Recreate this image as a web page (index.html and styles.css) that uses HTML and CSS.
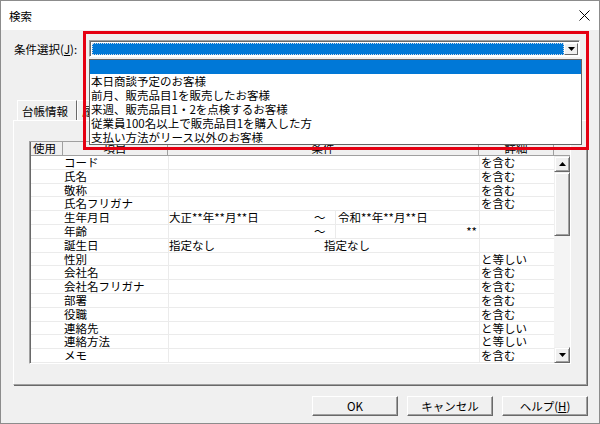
FILE: index.html
```html
<!DOCTYPE html>
<html lang="ja">
<head>
<meta charset="utf-8">
<title>検索</title>
<link rel="stylesheet" href="styles.css">
</head>
<body>
<div class="window">
  <div class="titlebar">
    <span class="title">検索</span>
    <span class="close"><svg width="11" height="11" viewBox="0 0 11 11"><path d="M0.5 0.5L10.5 10.5M10.5 0.5L0.5 10.5" stroke="#000" stroke-width="1"/></svg></span>
  </div>
  <div class="body">
    <div class="cond-row">
      <span class="cond-label">条件選択(<u>J</u>):</span>
      <div class="combo">
        <div class="combo-field"></div>
        <div class="combo-btn"><svg width="7" height="4" viewBox="0 0 7 4"><path d="M0 0H7L3.5 4Z" fill="#000"/></svg></div>
      </div>
    </div>
    <div class="tabs">
      <div class="tab tab-active">台帳情報</div>
      <div class="tab">履歴情報</div>
    </div>
    <div class="panel">
      <div class="grid">
        <div class="grid-head">
          <div class="hcell hcell-use">使用</div>
          <div class="hcell">項目</div>
          <div class="hcell">条件</div>
          <div class="hcell">詳細</div>
          <div class="hcell hcell-pad"></div>
        </div>
        <div class="grid-body">
          <div class="rows">
            <div class="row"><div class="c-use"></div><div class="c-item">コード</div><div class="c-cond"></div><div class="c-det">を含む</div></div>
            <div class="row"><div class="c-use"></div><div class="c-item">氏名</div><div class="c-cond"></div><div class="c-det">を含む</div></div>
            <div class="row"><div class="c-use"></div><div class="c-item">敬称</div><div class="c-cond"></div><div class="c-det">を含む</div></div>
            <div class="row"><div class="c-use"></div><div class="c-item">氏名フリガナ</div><div class="c-cond"></div><div class="c-det">を含む</div></div>
            <div class="row"><div class="c-use"></div><div class="c-item">生年月日</div><div class="c-cond"><span class="sub-from">大正**年**月**日</span><span class="sub-tilde">〜</span><span class="sub-to">令和**年**月**日</span></div><div class="c-det"></div></div>
            <div class="row"><div class="c-use"></div><div class="c-item">年齢</div><div class="c-cond"><span class="sub-from"></span><span class="sub-tilde">〜</span><span class="sub-to sub-right">**</span></div><div class="c-det"></div></div>
            <div class="row"><div class="c-use"></div><div class="c-item">誕生日</div><div class="c-cond"><span class="sub-wide">指定なし</span><span>指定なし</span></div><div class="c-det"></div></div>
            <div class="row"><div class="c-use"></div><div class="c-item">性別</div><div class="c-cond"></div><div class="c-det">と等しい</div></div>
            <div class="row"><div class="c-use"></div><div class="c-item">会社名</div><div class="c-cond"></div><div class="c-det">を含む</div></div>
            <div class="row"><div class="c-use"></div><div class="c-item">会社名フリガナ</div><div class="c-cond"></div><div class="c-det">を含む</div></div>
            <div class="row"><div class="c-use"></div><div class="c-item">部署</div><div class="c-cond"></div><div class="c-det">を含む</div></div>
            <div class="row"><div class="c-use"></div><div class="c-item">役職</div><div class="c-cond"></div><div class="c-det">を含む</div></div>
            <div class="row"><div class="c-use"></div><div class="c-item">連絡先</div><div class="c-cond"></div><div class="c-det">と等しい</div></div>
            <div class="row"><div class="c-use"></div><div class="c-item">連絡方法</div><div class="c-cond"></div><div class="c-det">と等しい</div></div>
            <div class="row"><div class="c-use"></div><div class="c-item">メモ</div><div class="c-cond"></div><div class="c-det">を含む</div></div>
          </div>
          <div class="vscroll">
            <div class="sb-btn"><svg width="7" height="4" viewBox="0 0 7 4"><path d="M0 4H7L3.5 0Z" fill="#000"/></svg></div>
            <div class="sb-thumb"></div>
            <div class="sb-track"></div>
            <div class="sb-btn"><svg width="7" height="4" viewBox="0 0 7 4"><path d="M0 0H7L3.5 4Z" fill="#000"/></svg></div>
          </div>
        </div>
      </div>
    </div>
    <div class="buttons">
      <div class="btn">OK</div>
      <div class="btn">キャンセル</div>
      <div class="btn">ヘルプ(<u>H</u>)</div>
    </div>
  </div>
  <ul class="droplist">
    <li class="drop-sel"></li>
    <li>本日商談予定のお客様</li>
    <li>前月、販売品目1を販売したお客様</li>
    <li>来週、販売品目1・2を点検するお客様</li>
    <li>従業員100名以上で販売品目1を購入した方</li>
    <li>支払い方法がリース以外のお客様</li>
  </ul>
  <div class="highlight"></div>
</div>
</body>
</html>
```

FILE: styles.css
```css
* { box-sizing: border-box; }
html, body { margin: 0; padding: 0; }
body {
  width: 600px;
  height: 424px;
  overflow: hidden;
  font-family: "Noto Sans CJK JP", "Liberation Sans", sans-serif;
  font-size: 11.5px;
  color: #000;
}
.window {
  position: relative;
  width: 600px;
  height: 424px;
  border: 1px solid #8c8c8c;
  background: #f0f0f0;
}
.titlebar {
  height: 29px;
  background: #fff;
  display: flex;
  align-items: center;
  justify-content: space-between;
  padding: 0 9px 0 8px;
}
.title { font-size: 11.5px; line-height: 14px; }
.close { display: flex; margin-top: -1px; }
.body {
  display: flex;
  flex-direction: column;
}
.cond-row {
  display: flex;
  align-items: center;
  margin-top: 10px;
  height: 17px;
  padding-left: 13px;
}
.cond-label { width: 75px; line-height: 14px; }
.combo {
  width: 491px;
  height: 17px;
  display: flex;
  border: 1px solid;
  border-color: #a0a0a0 #fff #fff #a0a0a0;
  box-shadow: inset 1px 1px #696969;
  padding: 2px 1px 1px 2px;
  background: #fff;
}
.combo-field {
  flex: 1;
  background: #0078d7;
  outline: 1px dotted #cfd9e6;
  outline-offset: -1px;
}
.combo-btn {
  width: 14px;
  display: flex;
  align-items: center;
  justify-content: center;
  background: #f0f0f0;
  border: 1px solid;
  border-color: #fff #696969 #696969 #fff;
}
.tabs {
  display: flex;
  margin-top: 43px;
  height: 20px;
  padding-left: 16px;
}
.tab {
  height: 20px;
  padding: 0 4px;
  line-height: 20px;
  border-top: 1px solid #fff;
  border-left: 1px solid #fff;
  border-right: 1px solid #696969;
}
.tab-active { width: 60px; position: relative; }
.panel {
  margin-left: 12px;
  width: 574px;
  height: 265px;
  border: 1px solid;
  border-color: #fff #a0a0a0 #a0a0a0 #fff;
  box-shadow: 1px 1px #696969;
  padding: 20px 0 0 15px;
}
.grid {
  width: 542px;
  border: 1px solid;
  border-color: #a0a0a0 #fff #fff #a0a0a0;
  box-shadow: inset 1px 1px #696969;
  background: #fff;
}
.grid-head {
  display: grid;
  grid-template-columns: 32px 105px 311px 75px 17px;
  height: 14px;
  background: #f0f0f0;
  border-bottom: 1px solid #a0a0a0;
  margin-left: 1px;
}
.hcell {
  line-height: 13px;
  text-align: center;
  border-right: 1px solid #a0a0a0;
  overflow: hidden;
}
.hcell-use { text-align: left; padding-left: 2px; }
.hcell-pad { border-right: 0; }
.grid-body {
  display: flex;
  margin-left: 1px;
}
.rows { width: 523px; }
.row {
  display: grid;
  grid-template-columns: 32px 105px 311px 75px;
  height: 13.8px;
  line-height: 13px;
  border-bottom: 1px solid #ebebeb;
}
.c-item { padding-left: 1px; white-space: nowrap; }
.c-cond {
  display: flex;
  border-left: 1px solid #ebebeb;
  white-space: nowrap;
}
.c-det { border-left: 1px solid #ebebeb; padding-left: 1px; }
.sub-from { width: 145px; }
.sub-tilde { width: 22px; border-right: 1px solid #ebebeb; }
.sub-to { flex: 1; padding-left: 2px; }
.sub-right { text-align: right; padding-right: 2px; }
.sub-wide { width: 155px; }
.vscroll {
  width: 17px;
  display: flex;
  flex-direction: column;
  background: #f0f0f0;
}
.sb-btn, .sb-thumb {
  background: #f0f0f0;
  border: 1px solid;
  border-color: #f0f0f0 #696969 #696969 #f0f0f0;
  box-shadow: inset 1px 1px #fff, inset -1px -1px #a0a0a0;
}
.sb-btn {
  height: 16px;
  display: flex;
  align-items: center;
  justify-content: center;
}
.sb-thumb { height: 64px; }
.sb-track { flex: 1; background: #f4f4f4; }
.buttons {
  display: flex;
  justify-content: flex-end;
  gap: 9px;
  margin-top: 11px;
  padding-right: 11px;
}
.btn {
  width: 86px;
  height: 20px;
  text-align: center;
  line-height: 18px;
  background: #f0f0f0;
  border: 1px solid;
  border-color: #fff #696969 #696969 #fff;
  box-shadow: inset -1px -1px #a0a0a0;
}
.droplist {
  position: absolute;
  left: 88px;
  top: 58px;
  width: 493px;
  height: 86px;
  margin: 0;
  padding: 0;
  list-style: none;
  background: #fff;
  border: 1px solid #646464;
}
.droplist li {
  height: 14px;
  line-height: 14px;
  padding-left: 1px;
  white-space: nowrap;
}
.droplist .drop-sel { background: #0078d7; }
.highlight {
  position: absolute;
  left: 82px;
  top: 30px;
  width: 506px;
  height: 119px;
  border: 3px solid #e50012;
  pointer-events: none;
}
```
